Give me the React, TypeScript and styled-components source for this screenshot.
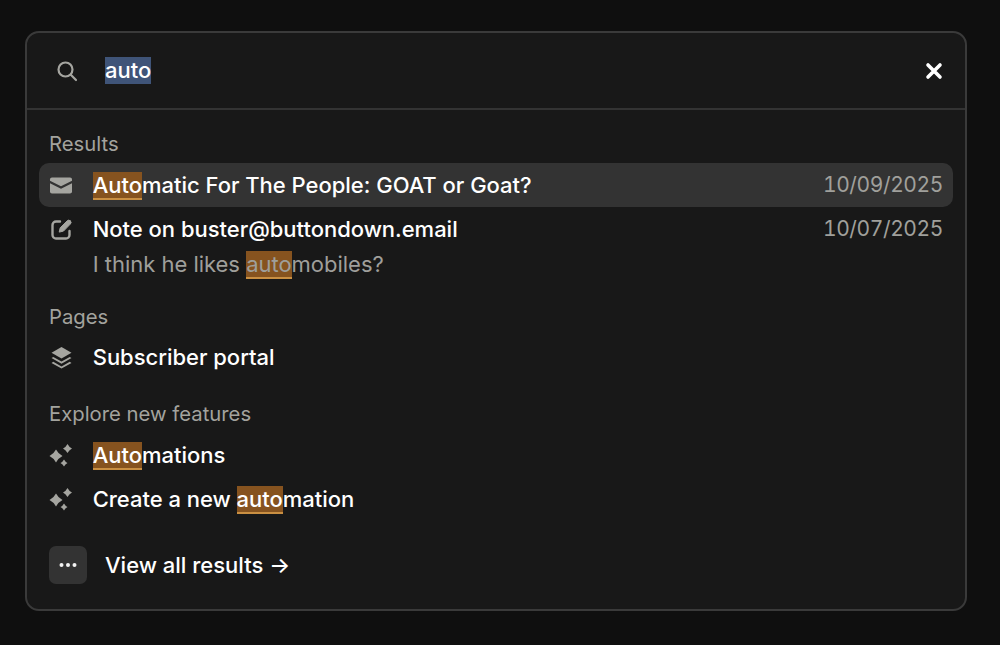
import styled, { createGlobalStyle } from "styled-components";

const GlobalStyle = createGlobalStyle`
  html, body {
    margin: 0;
    padding: 0;
    background: #0f0f0f;
    font-family: Inter, "Liberation Sans", sans-serif;
  }
`;

const Page = styled.div`
  box-sizing: border-box;
  width: 1000px;
  height: 645px;
  padding: 31px 33px 0 25px;
  overflow: hidden;
`;

const Panel = styled.div`
  box-sizing: border-box;
  width: 942px;
  height: 580px;
  background: #181818;
  border: 2px solid #3a3a3a;
  border-radius: 14px;
  overflow: hidden;
`;

const SearchBar = styled.div`
  box-sizing: border-box;
  height: 77px;
  display: flex;
  align-items: center;
  padding: 0 21px 0 28px;
  border-bottom: 2px solid #333;
`;

const SearchIcon = styled.svg`
  width: 24px;
  height: 24px;
  color: #a5a5a0;
  margin-right: 26px;
  flex-shrink: 0;
`;

const Query = styled.span`
  font-size: 22px;
  line-height: 27px;
  font-weight: 450;
  color: #fff;
  background: #3f5478;
  margin-right: auto;
`;

const CloseIcon = styled.svg`
  width: 20px;
  height: 20px;
  color: #fff;
`;

const Body = styled.div`
  padding: 17px 12px 0;
`;

const Section = styled.div<{ $gap?: number }>`
  margin-bottom: ${({ $gap }) => $gap ?? 0}px;
`;

const SectionLabel = styled.div<{ $tall?: boolean }>`
  font-size: 20.3px;
  line-height: 34px;
  height: ${({ $tall }) => ($tall ? 36 : 35)}px;
  color: #a3a39e;
  padding-left: 10px;
`;

const Row = styled.div<{ $active?: boolean }>`
  display: flex;
  align-items: flex-start;
  padding: 0 10px;
  border-radius: 10px;
  background: ${({ $active }) => ($active ? "#333333" : "transparent")};
`;

const IconSlot = styled.div`
  width: 43.700px;
  height: 44px;
  flex-shrink: 0;
  display: flex;
  align-items: center;
  color: #a5a5a0;
  svg {
    width: 25px;
    height: 25px;
  }
`;

const RowText = styled.div`
  flex: 1;
  min-width: 0;
`;

const Title = styled.div`
  font-size: 22px;
  letter-spacing: -0.02px;
  line-height: 44px;
  height: 44px;
  font-weight: 500;
  color: #fff;
`;

const Snippet = styled.div`
  font-size: 22px;
  letter-spacing: -0.02px;
  line-height: 26px;
  height: 33px;
  color: #9f9f9b;
`;

const RowDate = styled.div`
  font-size: 21px;
  line-height: 44px;
  color: #a0a09c;
  letter-spacing: -0.4px;
  font-variant-numeric: tabular-nums;
`;

const Hit = styled.mark`
  color: inherit;
  background: #86531f;
  border-bottom: 2px solid #c98f42;
`;

const Footer = styled.div`
  display: flex;
  align-items: center;
  gap: 18px;
  margin-top: 25px;
  padding-left: 10px;
`;

const MoreButton = styled.div`
  width: 38px;
  height: 38px;
  border-radius: 7px;
  background: #333333;
  display: flex;
  align-items: center;
  justify-content: center;
  svg {
    width: 22px;
    height: 22px;
    color: #f2f2f2;
  }
`;

const FooterText = styled.span`
  font-size: 22px;
  font-weight: 500;
  color: #fff;
`;

const MailIcon = () => (
  <svg viewBox="0 0 25 25" fill="currentColor">
    <path d="M3 4.500h18c1.200 0 2 .8 2 2v1.300L12 13.300 1 7.800V6.500c0-1.200.8-2 2-2z" />
    <path d="M1 10.200l11 5.500 11-5.500v8.300c0 1.200-.8 2-2 2H3c-1.200 0-2-.8-2-2z" />
  </svg>
);

const NoteIcon = () => (
  <svg viewBox="0 0 25 25" fill="none" stroke="currentColor" strokeWidth="2.400" strokeLinecap="round" strokeLinejoin="round">
    <path d="M11 4.500H7A3.500 3.500 0 0 0 3.500 8v10A3.500 3.500 0 0 0 7 21.500h10a3.500 3.500 0 0 0 3.500-3.500v-4" />
    <path d="M21.300 3.800a2.200 2.200 0 0 0-3.100 0l-7 7-1 4.300 4.300-1 6.800-7a2.200 2.200 0 0 0 0-3.300z" fill="currentColor" strokeWidth="1" />
  </svg>
);

const LayersIcon = () => (
  <svg viewBox="0 0 25 25" fill="currentColor">
    <path d="M12.500 2 22.500 7.800l-10 5.800-10-5.800z" />
    <path d="M4.300 11.900 2.500 13l10 5.800 10-5.800-1.800-1.100-8.200 4.700z" />
    <path d="M4.300 16.800 2.500 17.900l10 5.600 10-5.600-1.800-1.100-8.200 4.600z" />
  </svg>
);

const SparkleIcon = () => (
  <svg viewBox="0 0 25 25" fill="currentColor">
    <path d="M7 6.500Q9.200 10.800 13.500 13 9.200 15.200 7 19.500 4.800 15.200.5 13 4.800 10.800 7 6.500z" />
    <path d="M18.500 1Q20 4 23 5.500 20 7 18.500 10 17 7 14 5.500 17 4 18.500 1z" />
    <path d="M15 16.500Q16.200 18.800 18.500 20 16.200 21.200 15 23.500 13.800 21.200 11.500 20 13.800 18.800 15 16.500z" />
  </svg>
);

export default function App() {
  return (
    <>
      <GlobalStyle />
      <Page>
        <Panel>
          <SearchBar>
            <SearchIcon viewBox="0 0 24 24" fill="none" stroke="currentColor" strokeWidth="2.200" strokeLinecap="round">
              <circle cx="10.500" cy="10.500" r="7" />
              <path d="M15.800 15.800 21 21" />
            </SearchIcon>
            <Query>auto</Query>
            <CloseIcon viewBox="0 0 20 20" fill="none" stroke="currentColor" strokeWidth="3.600" strokeLinecap="round">
              <path d="M4 4l12 12M16 4 4 16" />
            </CloseIcon>
          </SearchBar>
          <Body>
            <Section $gap={16}>
              <SectionLabel $tall>Results</SectionLabel>
              <Row $active>
                <IconSlot><MailIcon /></IconSlot>
                <RowText>
                  <Title><Hit>Auto</Hit>matic For The People: GOAT or Goat?</Title>
                </RowText>
                <RowDate>10/09/2025</RowDate>
              </Row>
              <Row>
                <IconSlot><NoteIcon /></IconSlot>
                <RowText>
                  <Title>Note on buster@buttondown.email</Title>
                  <Snippet>I think he likes <Hit>auto</Hit>mobiles?</Snippet>
                </RowText>
                <RowDate>10/07/2025</RowDate>
              </Row>
            </Section>
            <Section $gap={18}>
              <SectionLabel>Pages</SectionLabel>
              <Row>
                <IconSlot><LayersIcon /></IconSlot>
                <RowText><Title>Subscriber portal</Title></RowText>
              </Row>
            </Section>
            <Section>
              <SectionLabel $tall>Explore new features</SectionLabel>
              <Row>
                <IconSlot><SparkleIcon /></IconSlot>
                <RowText><Title><Hit>Auto</Hit>mations</Title></RowText>
              </Row>
              <Row>
                <IconSlot><SparkleIcon /></IconSlot>
                <RowText><Title>Create a new <Hit>auto</Hit>mation</Title></RowText>
              </Row>
            </Section>
            <Footer>
              <MoreButton>
                <svg viewBox="0 0 22 22" fill="currentColor">
                  <circle cx="4.500" cy="11" r="2" />
                  <circle cx="11" cy="11" r="2" />
                  <circle cx="17.500" cy="11" r="2" />
                </svg>
              </MoreButton>
              <FooterText>View all results →</FooterText>
            </Footer>
          </Body>
        </Panel>
      </Page>
    </>
  );
}
